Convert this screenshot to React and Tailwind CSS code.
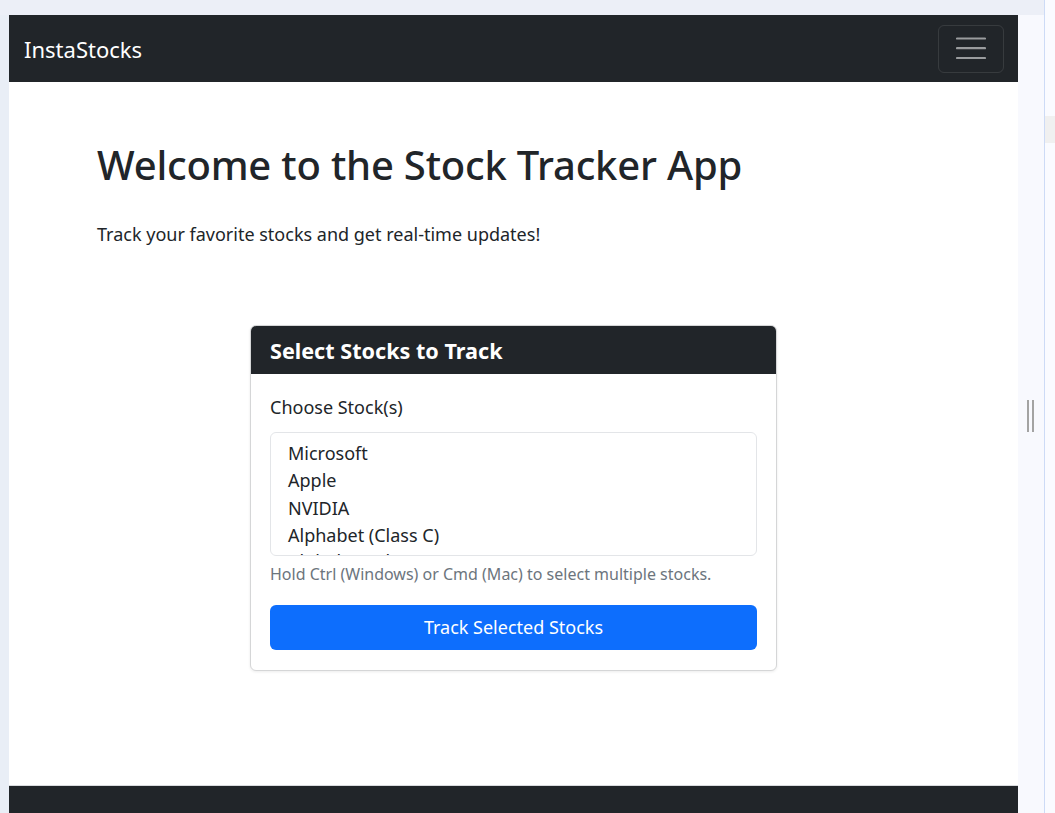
import React from "react";

const font = { fontFamily: '"Noto Sans", "Open Sans", sans-serif' };

function Hamburger() {
  return (
    <svg width="30" height="30" viewBox="0 0 30 30" aria-hidden="true">
      <path d="M1 4.5h28M1 14.2h28M1 24h28" stroke="rgba(255,255,255,0.55)" strokeWidth="2.2" strokeLinecap="round" />
    </svg>
  );
}

export default function App() {
  return (
    <div className="flex h-[813px] w-[1055px] overflow-hidden bg-[#e9eef6] text-[#212529]" style={font}>
      <div className="flex w-[1044px] flex-col">
        <div className="h-[15px] shrink-0 bg-[#eceff7]" />
        <div className="flex flex-1">
          <div className="w-[9px] shrink-0 bg-[#e9eef6]" />
          <div className="flex w-[1009px] shrink-0 flex-col bg-white">
            <nav className="flex h-[67px] shrink-0 items-center justify-between bg-[#212529] pl-[15px] pr-[14px]">
              <span className="text-[22px] leading-[32px] text-white">InstaStocks</span>
              <button className="flex h-[48px] w-[66px] items-center justify-center rounded-[6px] border border-[rgba(255,255,255,0.1)]">
                <Hamburger />
              </button>
            </nav>
            <main className="h-[703px] shrink-0 px-[88px] pt-[59px]">
              <h1 className="text-[40px] font-medium leading-[48px] tracking-[-0.2px]">Welcome to the Stock Tracker App</h1>
              <p className="mt-[32px] text-[18px] leading-[27px]">Track your favorite stocks and get real-time updates!</p>
              <div className="mt-[77px] w-[527px] overflow-hidden rounded-[6px] border border-[#d5d6d7] bg-white shadow-[0_1px_3px_rgba(0,0,0,0.08)]" style={{ marginLeft: 153 }}>
                <div className="flex h-[48px] items-center bg-[#212529] px-[19px]">
                  <h4 className="pt-[1px] text-[21.6px] font-bold leading-[28px] text-white">Select Stocks to Track</h4>
                </div>
                <div className="px-[19px] pb-[20px] pt-[20px]">
                  <label className="block text-[18px] leading-[27px]">Choose Stock(s)</label>
                  <div className="mt-[11px] h-[124px] overflow-hidden rounded-[6px] border border-[#e3e5e8] pl-[17px] pt-[7px] text-[18px] leading-[27.3px]">
                    <div>Microsoft</div>
                    <div>Apple</div>
                    <div>NVIDIA</div>
                    <div>Alphabet (Class C)</div>
                    <div className="-mt-[1px]">Alphabet (Class A)</div>
                  </div>
                  <div className="mt-[6px] text-[16px] leading-[24px] text-[#6c757d]">Hold Ctrl (Windows) or Cmd (Mac) to select multiple stocks.</div>
                  <button className="mt-[19px] flex h-[45px] w-full items-center justify-center rounded-[6px] bg-[#0d6efd] text-[18px] text-white">
                    Track Selected Stocks
                  </button>
                </div>
              </div>
            </main>
            <footer className="flex-1 border-t border-[#d9dbde] bg-[#212529]" />
          </div>
          <div className="w-[26px] shrink-0 bg-[#f8f9fe] pt-[385px]">
            <div className="ml-[9px] flex h-[32px] gap-[3px]">
              <div className="w-[2px] bg-[#a3a3a3]" />
              <div className="w-[2px] bg-[#a3a3a3]" />
            </div>
          </div>
        </div>
      </div>
      <div className="w-px shrink-0 bg-[#cddbf6]" />
      <div className="flex w-[10px] shrink-0 flex-col bg-[#fafbff]">
        <div className="mt-[116px] h-[27px] bg-[#f0f0f0]" />
      </div>
    </div>
  );
}
